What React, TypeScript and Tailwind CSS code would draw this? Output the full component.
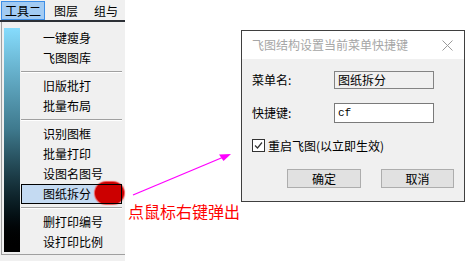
import React from "react";

const cjk = { fontFamily: '"Noto Sans CJK SC", "Liberation Sans", sans-serif' };

type Item = { label: string } | { sep: true };

const items: Item[] = [
  { label: "一键瘦身" },
  { label: "飞图图库" },
  { sep: true },
  { label: "旧版批打" },
  { label: "批量布局" },
  { sep: true },
  { label: "识别图框" },
  { label: "批量打印" },
  { label: "设图名图号" },
  { label: "图纸拆分" },
  { sep: true },
  { label: "删打印编号" },
  { label: "设打印比例" },
];

const MenuRow = ({ label }: { label: string }) => {
  const active = label === "图纸拆分";
  return (
    <div
      className={`relative h-[20px] flex items-center pl-[22px] text-[12px] leading-none text-black ${
        active ? "bg-[#c4daf2]" : ""
      }`}
    >
      {active && (
        <div className="absolute left-[74px] top-[-2px] w-[29px] h-[22px] rounded-full bg-[#cc0000] shadow-[0_0_1px_1px_#ee5555]" />
      )}
      <span className="relative">{label}</span>
      {active && (
        <div className="absolute inset-0 border border-black pointer-events-none" />
      )}
    </div>
  );
};

const ToolMenu = () => (
  <div className="absolute left-0 top-0 w-[125px] h-[261px] bg-[#f0f0f0]">
    <div className="h-[20px] flex items-stretch pt-[1px] pl-[1px] text-[12px] leading-none overflow-hidden whitespace-nowrap">
      <div className="w-[51px] h-[19px] flex items-center justify-center border border-[#3d8ee6] bg-[#a2cbf3]">
        工具二
      </div>
      <div className="px-[9px] flex items-center">图层</div>
      <div className="px-[7px] flex items-center">组与</div>
    </div>
    <div className="h-[2px] bg-[#2c3036]" />
    <div className="ml-[1px] w-[124px] h-[233px] border-l border-b border-[#a0a0a0] flex pt-[6px] pl-[2px]">
      <div className="w-[16px] h-[224px] bg-gradient-to-b from-[#86dcfd] via-[#3f7a8e] via-45% to-black" />
      <div className="ml-[1px] w-[101px] flex flex-col">
        {items.map((it, i) =>
          "sep" in it ? (
            <div key={i} className="h-[8px] flex flex-col justify-center">
              <div className="h-[1px] bg-[#a0a0a0]" />
              <div className="h-[1px] bg-white" />
            </div>
          ) : (
            <MenuRow key={i} label={it.label} />
          )
        )}
      </div>
    </div>
  </div>
);

const Dialog = () => (
  <div className="absolute left-[241px] top-[30px] w-[224px] h-[172px] border border-[#3f3f3f] bg-[#f0f0f0] flex flex-col text-[12px] leading-none text-black">
    <div className="h-[28px] bg-white flex items-center justify-between pl-[10px] pr-[8px]">
      <span className="text-[#a6a6a6]">飞图结构设置当前菜单快捷键</span>
      <svg width="11" height="11" viewBox="0 0 11 11" className="mr-[3px]">
        <path d="M0.5 0.5L10.5 10.5M10.5 0.5L0.5 10.5" stroke="#9a9a9a" strokeWidth="1" />
      </svg>
    </div>
    <div className="flex flex-col px-[10px]">
      <div className="mt-[12px] flex items-center">
        <span className="w-[82px]">菜单名:</span>
        <div className="w-[100px] h-[18px] border border-[#838383] bg-[#f0f0f0] flex items-center pl-[3px]">
          图纸拆分
        </div>
      </div>
      <div className="mt-[14px] flex items-center">
        <span className="w-[82px]">快捷键:</span>
        <div
          className="w-[100px] h-[20px] border border-[#7a7a7a] bg-white flex items-center pl-[3px] text-[11px]"
          style={{ fontFamily: '"Liberation Mono", monospace' }}
        >
          cf
        </div>
      </div>
      <div className="mt-[16px] flex items-center">
        <div className="w-[13px] h-[13px] border border-[#333] bg-white flex items-center justify-center">
          <svg width="9" height="9" viewBox="0 0 9 9">
            <path d="M1 4.5L3.5 7L8 1.5" stroke="#333" strokeWidth="1.2" fill="none" />
          </svg>
        </div>
        <span className="ml-[3px]">重启飞图(以立即生效)</span>
      </div>
      <div className="mt-[17px] flex pl-[35px] gap-[20px]">
        <div className="w-[74px] h-[19px] border border-[#adadad] bg-[#e1e1e1] flex items-center justify-center">
          确定
        </div>
        <div className="w-[73px] h-[19px] border border-[#adadad] bg-[#e1e1e1] flex items-center justify-center">
          取消
        </div>
      </div>
    </div>
  </div>
);

export default function App() {
  return (
    <div className="relative w-[474px] h-[261px] bg-white overflow-hidden" style={cjk}>
      <ToolMenu />
      <svg className="absolute left-0 top-0 pointer-events-none" width="474" height="261">
        <line x1="133" y1="195" x2="226" y2="156" stroke="#ff00ff" strokeWidth="1.3" />
        <path d="M231 154L219 154.5L223.5 161Z" fill="#ff00ff" />
      </svg>
      <div className="absolute left-[128px] top-[203px] text-[16px] leading-none text-[#ff0000]">
        点鼠标右键弹出
      </div>
      <Dialog />
    </div>
  );
}
